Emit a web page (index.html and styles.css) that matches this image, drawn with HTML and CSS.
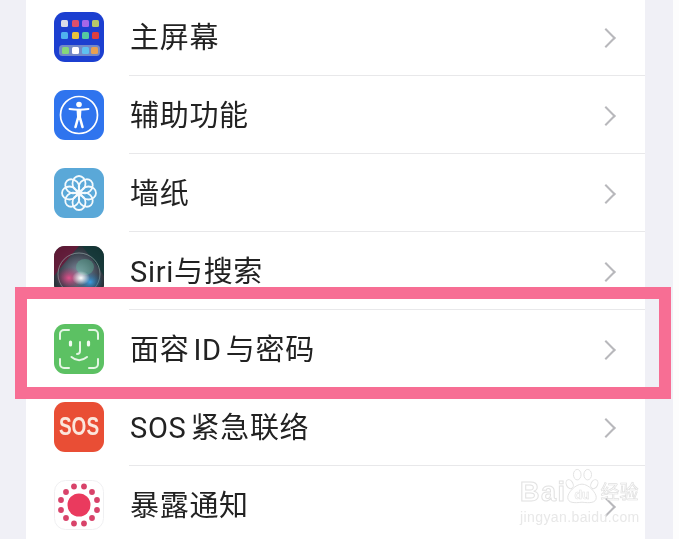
FILE: index.html
```html
<!DOCTYPE html>
<html lang="zh-CN">
<head>
    <meta charset="UTF-8">
    <title>设置</title>
    <link rel="stylesheet" href="styles.css">
</head>
<body>
    <div class="screen">
        <ul class="settings-list">
            <li class="row">
                <svg class="icon" viewBox="0 0 50 50">
                    <rect width="50" height="50" rx="11" fill="#1c3fd0"/>
                    <rect x="7" y="8" width="7" height="7" rx="1.5" fill="#d9dbe8"/>
                    <rect x="18" y="8" width="7" height="7" rx="1.5" fill="#dc4f6c"/>
                    <rect x="28" y="8" width="7" height="7" rx="1.5" fill="#a566e8"/>
                    <rect x="38" y="8" width="7" height="7" rx="1.5" fill="#b5c86a"/>
                    <rect x="7" y="20" width="7" height="7" rx="1.5" fill="#4fb2ee"/>
                    <rect x="18" y="20" width="7" height="7" rx="1.5" fill="#e8c23c"/>
                    <rect x="28" y="20" width="7" height="7" rx="1.5" fill="#56c8a0"/>
                    <rect x="38" y="20" width="7" height="7" rx="1.5" fill="#dd3f3f"/>
                    <rect x="5" y="33" width="41" height="11" rx="3.5" fill="#7388c8"/>
                    <rect x="8" y="35" width="7" height="7" rx="1.5" fill="#86d67a"/>
                    <rect x="18" y="35" width="7" height="7" rx="1.5" fill="#ffffff"/>
                    <rect x="28" y="35" width="7" height="7" rx="1.5" fill="#5ec0f0"/>
                    <rect x="37" y="35" width="7" height="7" rx="1.5" fill="#e8a050"/>
                </svg>
                <div class="row-body"><span class="label">主屏幕</span><span class="chevron"></span></div>
            </li>
            <li class="row">
                <svg class="icon" viewBox="0 0 50 50">
                    <rect width="50" height="50" rx="11" fill="#2f74ee"/>
                    <circle cx="25" cy="25" r="18.5" fill="none" stroke="#fff" stroke-width="1.7"/>
                    <circle cx="25" cy="14.5" r="2.8" fill="#fff"/>
                    <path d="M15.5 19 Q25 20.5 34.5 19" fill="none" stroke="#fff" stroke-width="2" stroke-linecap="round"/>
                    <path d="M25 20 V28 M24 28 L21.5 37 M26 28 L28.5 37" fill="none" stroke="#fff" stroke-width="2.6" stroke-linecap="round"/>
                    <path d="M22.5 19.5 H27.5 L26.8 30 H23.2 Z" fill="#fff"/>
                </svg>
                <div class="row-body"><span class="label">辅助功能</span><span class="chevron"></span></div>
            </li>
            <li class="row">
                <svg class="icon" viewBox="0 0 50 50">
                    <rect width="50" height="50" rx="11" fill="#5aa8d8"/>
                    <g fill="none" stroke="#f4fafd" stroke-width="1.8">
                        <ellipse cx="25" cy="15.5" rx="6.5" ry="7.5"/>
                        <ellipse cx="25" cy="15.5" rx="6.5" ry="7.5" transform="rotate(45 25 25)"/>
                        <ellipse cx="25" cy="15.5" rx="6.5" ry="7.5" transform="rotate(90 25 25)"/>
                        <ellipse cx="25" cy="15.5" rx="6.5" ry="7.5" transform="rotate(135 25 25)"/>
                        <ellipse cx="25" cy="15.5" rx="6.5" ry="7.5" transform="rotate(180 25 25)"/>
                        <ellipse cx="25" cy="15.5" rx="6.5" ry="7.5" transform="rotate(225 25 25)"/>
                        <ellipse cx="25" cy="15.5" rx="6.5" ry="7.5" transform="rotate(270 25 25)"/>
                        <ellipse cx="25" cy="15.5" rx="6.5" ry="7.5" transform="rotate(315 25 25)"/>
                    </g>
                    <circle cx="25" cy="25" r="2.6" fill="#f4fafd"/>
                </svg>
                <div class="row-body"><span class="label">墙纸</span><span class="chevron"></span></div>
            </li>
            <li class="row">
                <svg class="icon" viewBox="0 0 50 50">
                    <defs>
                        <radialGradient id="siri-bg" cx="50%" cy="55%" r="70%">
                            <stop offset="0%" stop-color="#8a93a8"/>
                            <stop offset="55%" stop-color="#3c4450"/>
                            <stop offset="100%" stop-color="#141a1c"/>
                        </radialGradient>
                        <radialGradient id="siri-pink" cx="50%" cy="50%" r="50%">
                            <stop offset="0%" stop-color="#e8508c" stop-opacity="0.95"/>
                            <stop offset="100%" stop-color="#a82058" stop-opacity="0"/>
                        </radialGradient>
                        <radialGradient id="siri-blue" cx="50%" cy="50%" r="50%">
                            <stop offset="0%" stop-color="#3aa0e8" stop-opacity="0.95"/>
                            <stop offset="100%" stop-color="#1c5a80" stop-opacity="0"/>
                        </radialGradient>
                        <radialGradient id="siri-white" cx="50%" cy="50%" r="50%">
                            <stop offset="0%" stop-color="#ffffff"/>
                            <stop offset="100%" stop-color="#ffffff" stop-opacity="0"/>
                        </radialGradient>
                    </defs>
                    <rect width="50" height="50" rx="11" fill="url(#siri-bg)"/>
                    <path d="M0 11 A11 11 0 0 1 11 0 H25 L8 20 L0 30 Z" fill="#6e1638" opacity="0.8"/>
                    <path d="M50 11 A11 11 0 0 0 39 0 H28 L42 18 L50 30 Z" fill="#123a38" opacity="0.8"/>
                    <circle cx="25" cy="28" r="21" fill="none" stroke="#8fa0a0" stroke-width="1" opacity="0.7"/>
                    <ellipse cx="15" cy="32" rx="13" ry="11" fill="url(#siri-pink)"/>
                    <ellipse cx="36" cy="36" rx="13" ry="11" fill="url(#siri-blue)"/>
                    <ellipse cx="31" cy="21" rx="9" ry="8" fill="#58c8a0" opacity="0.35"/>
                    <ellipse cx="27" cy="32" rx="9" ry="7" fill="url(#siri-white)"/>
                </svg>
                <div class="row-body"><span class="label">Siri与搜索</span><span class="chevron"></span></div>
            </li>
            <li class="row">
                <svg class="icon" viewBox="0 0 50 50">
                    <rect width="50" height="50" rx="11" fill="#5cc163"/>
                    <g fill="none" stroke="#e4f6e4" stroke-width="2" stroke-linecap="round" stroke-linejoin="round">
                        <path d="M6 15 V10 A4 4 0 0 1 10 6 H15"/>
                        <path d="M35 6 H40 A4 4 0 0 1 44 10 V15"/>
                        <path d="M6 35 V40 A4 4 0 0 0 10 44 H15"/>
                        <path d="M35 44 H40 A4 4 0 0 0 44 40 V35"/>
                        <path d="M26 18 V27 Q26 30 23 30"/>
                        <path d="M17.5 33 Q25 39.5 33 33"/>
                    </g>
                    <g fill="none" stroke="#f2fbf2" stroke-width="3.2" stroke-linecap="round">
                        <path d="M16.5 18 V21"/>
                        <path d="M34.5 18 V21"/>
                    </g>
                </svg>
                <div class="row-body"><span class="label">面容<span class="latin">ID</span>与密码</span><span class="chevron"></span></div>
            </li>
            <li class="row">
                <svg class="icon" viewBox="0 0 50 50">
                    <rect width="50" height="50" rx="11" fill="#e94e35"/>
                    <text class="sos-text" x="25" y="33.5" text-anchor="middle">SOS</text>
                </svg>
                <div class="row-body"><span class="label">SOS<span class="latin-end"></span>紧急联络</span><span class="chevron"></span></div>
            </li>
            <li class="row">
                <svg class="icon" viewBox="0 0 50 50">
                    <rect x="0.5" y="0.5" width="49" height="49" rx="11" fill="#fff" stroke="#f0f0f2"/>
                    <circle cx="25" cy="25" r="11.5" fill="#ea3a5e"/>
                    <g fill="#d8436a">
                        <circle cx="20" cy="6.5" r="2.9"/>
                        <circle cx="30" cy="6.5" r="2.9"/>
                        <circle cx="38" cy="12" r="2.9"/>
                        <circle cx="43" cy="20" r="2.9"/>
                        <circle cx="43" cy="30" r="2.9"/>
                        <circle cx="38" cy="38" r="2.9"/>
                        <circle cx="30" cy="43.5" r="2.9"/>
                        <circle cx="20" cy="43.5" r="2.9"/>
                        <circle cx="12" cy="38" r="2.9"/>
                        <circle cx="7" cy="30" r="2.9"/>
                        <circle cx="7" cy="20" r="2.9"/>
                        <circle cx="12" cy="12" r="2.9"/>
                    </g>
                </svg>
                <div class="row-body"><span class="label">暴露通知</span><span class="chevron"></span></div>
            </li>
        </ul>

        <div class="highlight-frame"></div>

        <div class="watermark">
            <div class="wm-top">
                <span class="wm-bai">Bai</span>
                <svg class="wm-paw" viewBox="0 0 40 40">
                    <g fill="none" stroke="#e2e2e2" stroke-width="1">
                        <ellipse cx="7" cy="17" rx="3.5" ry="5" transform="rotate(-25 7 17)"/>
                        <ellipse cx="15" cy="7" rx="4" ry="5.5"/>
                        <ellipse cx="26" cy="7" rx="4" ry="5.5"/>
                        <ellipse cx="33" cy="17" rx="3.5" ry="5" transform="rotate(25 33 17)"/>
                        <path d="M20 17 C13 17 5 26 5 31 C5 37 12 37 20 36 C28 37 35 37 35 31 C35 26 27 17 20 17 Z"/>
                    </g>
                    <text class="wm-du" x="20" y="33" text-anchor="middle">du</text>
                </svg>
                <span class="wm-jy">经验</span>
            </div>
            <div class="wm-url">jingyan.baidu.com</div>
        </div>
    </div>
</body>
</html>
```

FILE: styles.css
```css
* {
    box-sizing: border-box;
}

html, body {
    margin: 0;
    padding: 0;
    height: 100%;
    background: #fdfdfd;
    overflow: hidden;
}

body {
    font-family: Roboto, "Noto Sans CJK SC", sans-serif;
    color: #222;
}

.screen {
    position: relative;
    width: 673px;
    height: 539px;
    padding: 0 28px 0 26px;
    background: #f0f0f6;
    overflow: hidden;
    filter: blur(0.6px);
}

.settings-list {
    list-style: none;
    margin: -2px 0 0;
    padding: 0 0 0 28px;
    background: #fff;
}

.row {
    display: flex;
    align-items: center;
    gap: 25px;
    height: 78px;
}

.icon {
    flex: none;
    width: 50px;
    height: 50px;
}

.row-body {
    flex: 1;
    display: flex;
    align-items: center;
    justify-content: space-between;
    height: 100%;
    padding: 3px 29px 0 1px;
    border-bottom: 1.5px solid #e8e8ea;
}

.row:last-child .row-body {
    border-bottom: none;
}

.label {
    font-size: 29px;
    line-height: 1;
    letter-spacing: 0.7px;
    color: #222;
}

.latin {
    margin: 0 4px;
}

.latin-end {
    margin-right: 4px;
}

.chevron {
    width: 14px;
    height: 14px;
    margin-right: 3px;
    border-top: 2.5px solid #b8b8bc;
    border-right: 2.5px solid #b8b8bc;
    transform: rotate(45deg);
}

.sos-text {
    font-family: "Liberation Sans", sans-serif;
    font-size: 25px;
    font-weight: 700;
    fill: #fbe6dc;
    transform-origin: 25px 25px;
    transform: scaleX(0.76);
}

.highlight-frame {
    position: absolute;
    left: 15px;
    top: 287px;
    width: 656px;
    height: 112px;
    border: 12px solid #f76e94;
}

.watermark {
    position: absolute;
    left: 520px;
    top: 467px;
    width: 122px;
    color: #fff;
}

.wm-top {
    display: flex;
    align-items: flex-end;
}

.wm-bai {
    font-family: "Liberation Sans", sans-serif;
    font-size: 27px;
    font-weight: 700;
    line-height: 30px;
    letter-spacing: 1.5px;
    color: #fff;
    -webkit-text-stroke: 1px #e2e2e2;
}

.wm-paw {
    width: 38px;
    height: 40px;
    margin-left: -4px;
}

.wm-du {
    font-family: "Liberation Sans", sans-serif;
    font-size: 13px;
    font-weight: 700;
    fill: #fff;
    stroke: #e2e2e2;
    stroke-width: 0.6;
}

.wm-jy {
    font-size: 19px;
    line-height: 28px;
    margin-left: 0;
    color: #fff;
    -webkit-text-stroke: 0.7px #e0e0e0;
}

.wm-url {
    font-family: "Liberation Sans", sans-serif;
    font-size: 14px;
    line-height: 16px;
    margin-top: 2px;
    letter-spacing: 0.4px;
    color: #e8e8e8;
}
```
